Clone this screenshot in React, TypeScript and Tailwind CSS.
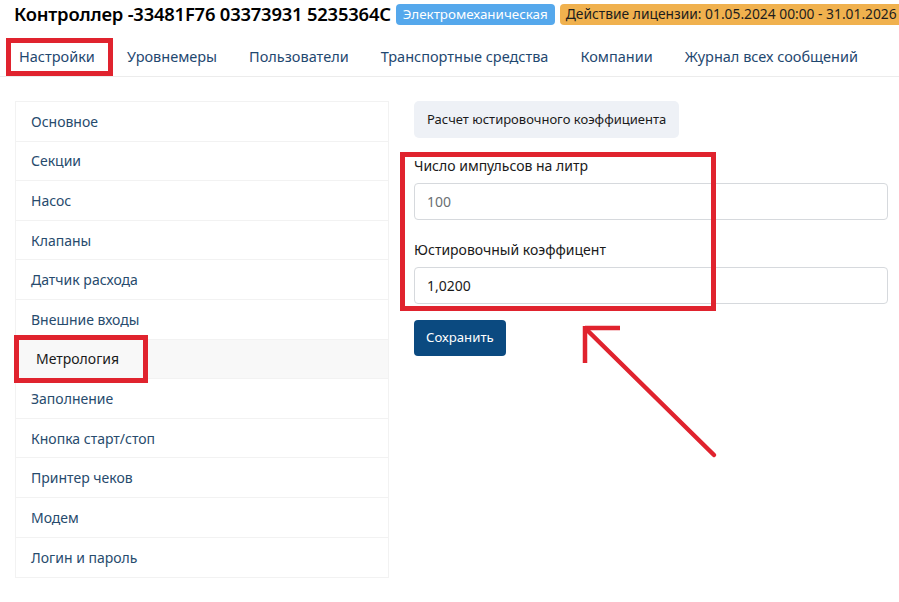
import React from "react";

const tabs = [
  "Настройки",
  "Уровнемеры",
  "Пользователи",
  "Транспортные средства",
  "Компании",
  "Журнал всех сообщений",
];

const menu = [
  "Основное",
  "Секции",
  "Насос",
  "Клапаны",
  "Датчик расхода",
  "Внешние входы",
  "Метрология",
  "Заполнение",
  "Кнопка старт/стоп",
  "Принтер чеков",
  "Модем",
  "Логин и пароль",
];

export default function App() {
  return (
    <div
      className="relative w-[899px] h-[602px] overflow-hidden bg-white text-[#212529]"
      style={{ fontFamily: '"Noto Sans", "Open Sans", sans-serif' }}
    >
      {/* title row */}
      <div className="flex items-center gap-[5px] pl-[14px] pt-[3px] h-[25px] whitespace-nowrap">
        <h1 className="text-[18.4px] font-semibold leading-none text-black tracking-[-0.2px]">
          Контроллер -33481F76 03373931 5235364C
        </h1>
        <span className="rounded-[4px] bg-[#55a8ec] px-[7px] h-[21px] flex items-center text-[13.4px] text-white">
          Электромеханическая
        </span>
        <span className="rounded-[4px] bg-[#f0b14e] px-[6px] h-[21px] flex items-center text-[13.8px] text-[#1d1d1d]">
          Действие лицензии: 01.05.2024 00:00 - 31.01.2026
        </span>
      </div>

      {/* tabs */}
      <nav className="mt-[12px] flex h-[40px] items-center border-b border-[#ececec] pl-[3px] whitespace-nowrap">
        {tabs.map((t) => (
          <a key={t} className="px-[16px] text-[14.5px] text-[#1f4870]">
            {t}
          </a>
        ))}
      </nav>

      {/* content */}
      <div className="flex gap-[25px] pl-[15px] pt-[24px]">
        <ul className="w-[374px] border border-[#f2f2f2] divide-y divide-[#f2f2f2]">
          {menu.map((m) => {
            const active = m === "Метрология";
            return (
              <li
                key={m}
                className={
                  active
                    ? "h-[39.6px] flex items-center pl-[20px] bg-[#f8f8f8] text-[14px] text-[#1a1a1a]"
                    : "h-[39.6px] flex items-center pl-[15px] text-[14px] text-[#274b6d]"
                }
              >
                {m}
              </li>
            );
          })}
        </ul>

        <div className="w-[474px] flex flex-col items-start">
          <button className="h-[37px] rounded-[5px] bg-[#eef1f6] px-[13px] text-[13px] text-[#1a1a1a]">
            Расчет юстировочного коэффициента
          </button>

          <label className="mt-[17px] text-[14px] text-[#1a1a1a]">Число импульсов на литр</label>
          <div className="mt-[7px] w-full h-[37px] rounded-[4px] border border-[#d6d9dd] flex items-center px-[12px] text-[14px] text-[#6b6f73]">
            100
          </div>

          <label className="mt-[19px] text-[14px] text-[#1a1a1a]">Юстировочный коэффицент</label>
          <div className="mt-[7px] w-full h-[37px] rounded-[4px] border border-[#d6d9dd] flex items-center px-[12px] text-[14px] text-[#1a1a1a]">
            1,0200
          </div>

          <button className="mt-[16px] h-[36px] rounded-[4px] bg-[#0b4a80] px-[12px] text-[13.2px] text-white">
            Сохранить
          </button>
        </div>
      </div>

      {/* red annotations */}
      <div className="absolute left-[6px] top-[38px] w-[107px] h-[38px] border-[5px] border-[#e0232e]" />
      <div className="absolute left-[14px] top-[335px] w-[134px] h-[48px] border-[5px] border-[#e0232e]" />
      <div className="absolute left-[400px] top-[152px] w-[316px] h-[159px] border-[5px] border-[#e0232e]" />
      <svg className="absolute left-0 top-0" width="899" height="602" viewBox="0 0 899 602">
        <g stroke="#e0232e" strokeWidth="4.5" strokeLinecap="round" fill="none">
          <line x1="714" y1="455" x2="587" y2="330" />
          <line x1="585" y1="328" x2="620" y2="328" strokeLinecap="butt" />
          <line x1="585" y1="326" x2="585" y2="363" strokeLinecap="butt" />
        </g>
      </svg>
    </div>
  );
}
